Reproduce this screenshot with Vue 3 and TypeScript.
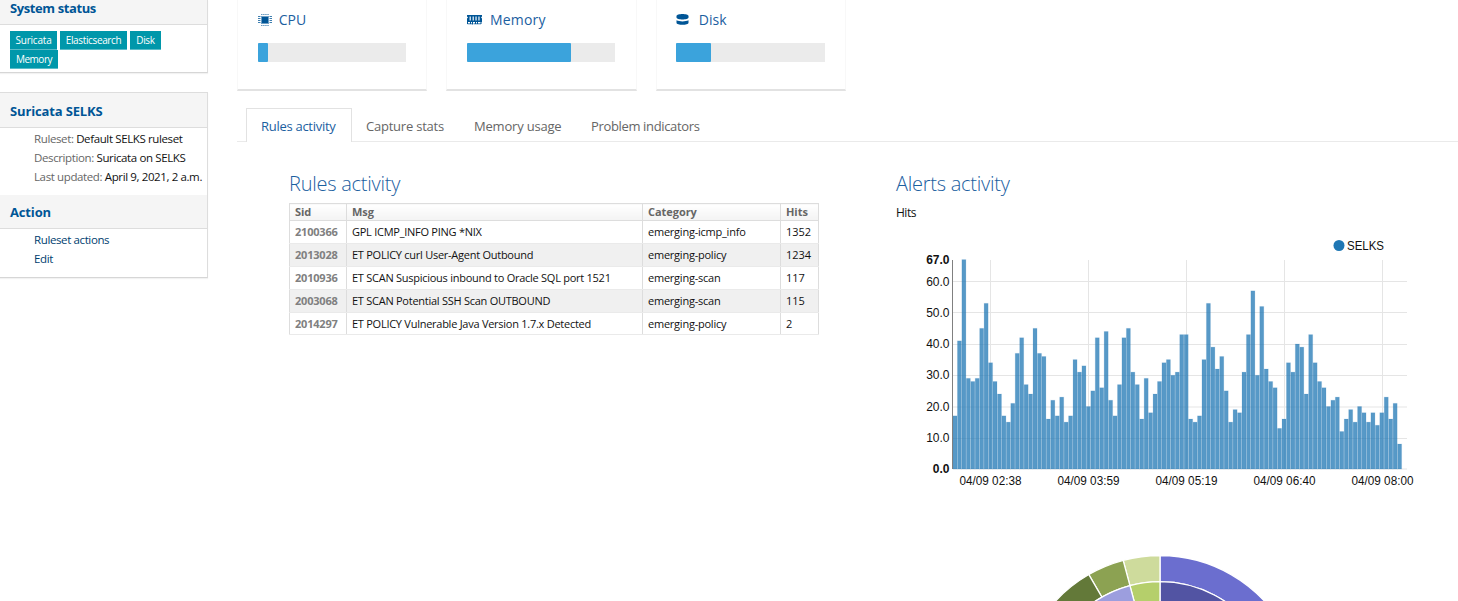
<script setup lang="ts">
interface Gauge { name: string; icon: 'cpu' | 'memory' | 'disk'; value: number }
interface Rule { sid: string; msg: string; category: string; hits: number }
interface Tick { label: string; pos: number; bold?: boolean }
interface Slice { from: number; to: number; inner: number; outer: number; color: string }

const services: string[] = ['Suricata', 'Elasticsearch', 'Disk', 'Memory']

const gauges: Gauge[] = [
  { name: 'CPU', icon: 'cpu', value: 7 },
  { name: 'Memory', icon: 'memory', value: 70 },
  { name: 'Disk', icon: 'disk', value: 23.5 },
]

const tabs = [
  { name: 'Rules activity', cls: 't-rules' },
  { name: 'Capture stats', cls: 't-capture' },
  { name: 'Memory usage', cls: 't-memory' },
  { name: 'Problem indicators', cls: 't-problem' },
]

const rules: Rule[] = [
  { sid: '2100366', msg: 'GPL ICMP_INFO PING *NIX', category: 'emerging-icmp_info', hits: 1352 },
  { sid: '2013028', msg: 'ET POLICY curl User-Agent Outbound', category: 'emerging-policy', hits: 1234 },
  { sid: '2010936', msg: 'ET SCAN Suspicious inbound to Oracle SQL port 1521', category: 'emerging-scan', hits: 117 },
  { sid: '2003068', msg: 'ET SCAN Potential SSH Scan OUTBOUND', category: 'emerging-scan', hits: 115 },
  { sid: '2014297', msg: 'ET POLICY Vulnerable Java Version 1.7.x Detected', category: 'emerging-policy', hits: 2 },
]

const hits: number[] = [
  17, 41, 67, 29, 28, 29, 45, 53, 34, 28, 24, 17, 15, 21, 37, 42, 27, 24, 45, 37,
  36, 16, 22, 17, 23, 15, 17, 35, 31, 33, 20, 25, 42, 26, 44, 22, 17, 27, 42, 45,
  31, 27, 16, 29, 18, 24, 28, 34, 35, 30, 31, 43, 43, 16, 15, 17, 35, 53, 39, 32,
  36, 25, 15, 19, 18, 31, 43, 57, 30, 52, 32, 28, 26, 13, 16, 34, 31, 40, 39, 24,
  43, 34, 28, 26, 20, 22, 23, 12, 16, 19, 15, 20, 18, 15, 18, 14, 18, 23, 16, 21, 8,
]

// Plot area of the bar chart, in chart coordinates
const left = 57
const base = 249
const scale = 3.125
const step = 4.446
const yOf = (v: number): number => base - v * scale

const yTicks: Tick[] = [67, 60, 50, 40, 30, 20, 10, 0].map((v) => ({
  label: v.toFixed(1),
  pos: yOf(v),
  bold: v === 67 || v === 0,
}))
const gridRows: number[] = [61.5, 92.5, 124.5, 155.5, 187, 218.5, 249]
const xTicks: Tick[] = ['02:38', '03:59', '05:19', '06:40', '08:00'].map((t, i) => ({
  label: `04/09 ${t}`,
  pos: 94.5 + i * 98,
}))

const slices: Slice[] = [
  { from: 0, to: 120, inner: 116.2, outer: 142.3, color: '#6b6ecf' },
  { from: 0, to: 120, inner: 82, outer: 116.2, color: '#5254a3' },
  { from: -15, to: 0, inner: 116.2, outer: 142.3, color: '#cedb9c' },
  { from: -15, to: 0, inner: 82, outer: 116.2, color: '#b5cf6b' },
  { from: -30, to: -15, inner: 116.2, outer: 142.3, color: '#8ca252' },
  { from: -80, to: -30, inner: 116.2, outer: 142.3, color: '#637939' },
  { from: -80, to: -15, inner: 82, outer: 116.2, color: '#9c9ede' },
]

function point(angle: number, r: number): string {
  const a = (angle * Math.PI) / 180
  return `${(Math.sin(a) * r).toFixed(2)},${(-Math.cos(a) * r).toFixed(2)}`
}
function arc(s: Slice): string {
  return `M${point(s.from, s.outer)}A${s.outer},${s.outer} 0 0 1 ${point(s.to, s.outer)}` +
    `L${point(s.to, s.inner)}A${s.inner},${s.inner} 0 0 0 ${point(s.from, s.inner)}Z`
}
</script>

<template>
  <div class="page">
    <aside class="sidebar">
      <section class="panel status">
        <h3 class="w-status">System status</h3>
        <div class="labels">
          <span v-for="s in services" :key="s" class="label" :class="'l-' + s.toLowerCase()">{{ s }}</span>
        </div>
      </section>
      <section class="panel host">
        <h3 class="w-selks">Suricata SELKS</h3>
        <ul class="info">
          <li><span class="key">Ruleset:</span> Default SELKS ruleset</li>
          <li><span class="key">Description:</span> Suricata on SELKS</li>
          <li><span class="key">Last updated:</span> April 9, 2021, 2 a.m.</li>
        </ul>
        <h3 class="action">Action</h3>
        <ul class="links">
          <li><a>Ruleset actions</a></li>
          <li><a>Edit</a></li>
        </ul>
      </section>
    </aside>

    <main class="main">
      <div class="gauges">
        <div v-for="g in gauges" :key="g.name" class="gauge">
          <div class="gauge-title">
            <svg v-if="g.icon === 'cpu'" class="icon" width="14" height="14" viewBox="0 0 14 14">
              <path d="M3 1.500h8M3 12.500h8" stroke="#005596" stroke-width="1" stroke-dasharray="1.500 .6" opacity=".6" />
              <path d="M0 3.500h2.500M0 5.500h2.500M0 7.500h2.500M0 9.500h2.500M11.500 3.500h2.500M11.500 5.500h2.500M11.500 7.500h2.500M11.500 9.500h2.500" stroke="#005596" stroke-width="1" opacity=".75" />
              <rect x="3" y="3" width="8" height="8" fill="#6f9fc5" />
              <rect x="4" y="4" width="6" height="6" fill="#005596" />
            </svg>
            <svg v-else-if="g.icon === 'memory'" class="icon" width="15" height="14" viewBox="0 0 15 14">
              <path d="M0 2h15v1.5l-1 1 1 1V9H0V5.500l1-1-1-1z" fill="#005596" />
              <path d="M2.500 3.500h1.500v4h-1.500zM5.500 3.500h1.500v4h-1.500zM8.300 3.500h1.500v4h-1.500zM11.200 3.500h1.500v4h-1.500z" fill="#c4d9e9" />
              <path d="M.5 9v2M3.500 9v2M5.500 9v2.500M8.500 9v2M10.500 9v2M14 9v2" stroke="#005596" />
              <path d="M.5 10.800h4.500M6.500 10.800h7.500" stroke="#005596" stroke-width=".8" />
            </svg>
            <svg v-else class="icon" width="13" height="14" viewBox="0 0 13 14">
              <path d="M.5 3.200C.5.400 12.500.400 12.500 3.200v1.300c0 2.600-12 2.600-12 0z" fill="#005596" />
              <path d="M.5 7.300c3 1.500 9 1.500 12 0v2.400c0 2.700-12 2.700-12 0z" fill="#005596" />
            </svg>
            <span :class="'g-' + g.icon">{{ g.name }}</span>
          </div>
          <div class="track"><div class="fill" :style="{ width: g.value + '%' }"></div></div>
        </div>
      </div>

      <nav class="tabs">
        <a v-for="(t, i) in tabs" :key="t.name" class="tab" :class="[t.cls, { active: i === 0 }]"><span>{{ t.name }}</span></a>
      </nav>

      <div class="content">
        <section class="rules">
          <h2>Rules activity</h2>
          <table>
            <colgroup><col class="c1"><col class="c2"><col class="c3"><col class="c4"></colgroup>
            <thead>
              <tr><th>Sid</th><th>Msg</th><th>Category</th><th>Hits</th></tr>
            </thead>
            <tbody>
              <tr v-for="r in rules" :key="r.sid">
                <td class="sid">{{ r.sid }}</td>
                <td class="msg">{{ r.msg }}</td>
                <td class="cat">{{ r.category }}</td>
                <td>{{ r.hits }}</td>
              </tr>
            </tbody>
          </table>
        </section>

        <section class="alerts">
          <h2>Alerts activity</h2>
          <p class="unit">Hits</p>
          <svg class="chart" width="561" height="280" viewBox="0 0 561 280">
            <circle cx="443" cy="25.500" r="5.500" fill="#1f77b4" />
            <text x="451" y="29.500" textLength="37" lengthAdjust="spacingAndGlyphs">SELKS</text>
            <path v-for="y in gridRows" :key="'r' + y" :d="`M57 ${y}H511`" stroke="#e5e5e5" />
            <path v-for="t in xTicks" :key="'c' + t.pos" :d="`M${t.pos} 40V249`" stroke="#e5e5e5" />
            <rect
              v-for="(v, i) in hits" :key="i" :x="left + i * step" :y="yOf(v)"
              :width="step - 0.45" :height="v * scale" fill="#1f77b4" fill-opacity=".75"
              stroke="#1f77b4" stroke-opacity=".12" stroke-width="1"
            />
            <path d="M56.500 40V249" stroke="#808080" />
            <text
              v-for="t in yTicks" :key="'y' + t.label" x="53.500" :y="t.pos + 4"
              text-anchor="end" :class="{ bold: t.bold }"
            >{{ t.label }}</text>
            <text
              v-for="t in xTicks" :key="t.label" :x="t.pos" y="264.500" text-anchor="middle"
              textLength="62" lengthAdjust="spacingAndGlyphs"
            >{{ t.label }}</text>
          </svg>
          <svg class="sunburst" width="561" height="101" viewBox="0 0 561 101">
            <g transform="translate(264 197.800)" stroke="#fff" stroke-width="1.300">
              <path v-for="(s, i) in slices" :key="i" :d="arc(s)" :fill="s.color" />
            </g>
          </svg>
        </section>
      </div>
    </main>
  </div>
</template>

<style>
html, body { margin: 0; background: #fff; overflow: hidden; }
</style>

<style scoped>
* { box-sizing: border-box; }
h2, h3, p, ul { margin: 0; padding: 0; }
.page {
  display: flex;
  width: 1458px;
  height: 601px;
  overflow: hidden;
  font-family: "Open Sans", "Noto Sans", sans-serif;
  font-size: 12px;
  color: #111;
  background: #fff;
}
.sidebar { width: 208px; flex: none; }
.panel {
  border: 1px solid #ddd;
  border-left: 0;
  border-bottom-color: #d6d6d6;
  box-shadow: 0 1px 1px rgba(0, 0, 0, .05);
}
.status { height: 73px; border-top: 0; }
.host { height: 186px; margin-top: 19px; }
h3 {
  padding-left: 10px;
  background: #f5f5f5;
  border-bottom: 1px solid #ddd;
  color: #005596;
  font-size: 13px;
  font-weight: 700;
  white-space: nowrap;
}
.status h3 { height: 25px; line-height: 16px; letter-spacing: -.4px; }
.host h3 { height: 35px; line-height: 36px; letter-spacing: -.15px; }
.host h3.action { height: 34px; line-height: 34px; }
.labels { display: flex; flex-wrap: wrap; gap: 0 3px; padding: 6px 40px 0 10px; }
.label {
  height: 19px;
  border: 1px solid #5bbcc8;
  border-width: 0 0 1px;
  background: #0097aa;
  color: #fff;
  font-size: 10px;
  line-height: 18px;
  text-align: center;
  white-space: nowrap;
}
.l-suricata { width: 47px; letter-spacing: -.2px; }
.l-elasticsearch { width: 67px; letter-spacing: -.36px; }
.l-disk { width: 31px; letter-spacing: -.3px; }
.l-memory { width: 48px; letter-spacing: -.5px; }
ul { list-style: none; }
li { height: 19px; padding-left: 34px; line-height: 19px; font-size: 11.500px; letter-spacing: -.38px; white-space: nowrap; }
.key { color: #666; }
.info { height: 67px; padding-top: 1px; }
.links { padding-top: 1px; }
.links a { color: #00406f; }
.main { flex: 1; min-width: 0; }
.gauges { display: flex; gap: 19px; padding-left: 29px; height: 91px; }
.gauge {
  width: 190.300px;
  padding: 10px 20px 0 19.700px;
  border: 1px solid #f8f8f8;
  border-top: 0;
  border-bottom: 2px solid #e2e2e2;
}
.gauge-title { display: flex; align-items: center; height: 19px; color: #1b609f; font-size: 14px; line-height: 19px; }
.icon { flex: none; margin-right: 8px; }
.g-cpu { margin-left: -1px; }
.g-memory { letter-spacing: .2px; }
.g-disk { margin-left: 1.500px; }
.track { margin-top: 14px; width: 148.500px; height: 19px; background: #ebebeb; }
.fill { height: 100%; background: #3ba3dc; border-radius: 1px; }
.tabs { display: flex; height: 34px; margin: 17px 0 0 29px; padding-left: 9px; border-bottom: 1px solid #eaeaea; }
.tab { height: 34px; line-height: 36px; font-size: 13px; color: #666; white-space: nowrap; letter-spacing: -.28px; }
.tab.active { border: 1px solid #e2e2e2; border-bottom: 0; background: #fff; color: #1b609f; line-height: 34px; }
.t-rules { width: 106px; padding-left: 14px; }
.t-capture { width: 107px; padding-left: 14px; letter-spacing: -.22px; }
.t-memory { width: 117px; padding-left: 15px; letter-spacing: -.2px; }
.t-problem { padding-left: 15px; letter-spacing: -.35px; }
.content { display: flex; padding-top: 27px; }
.rules { width: 607px; padding-left: 81px; margin-right: 81px; flex: none; }
h2 { height: 34px; line-height: 29px; font-size: 20px; font-weight: 300; color: #1b609f; white-space: nowrap; letter-spacing: -.25px; }
table { width: 530px; table-layout: fixed; border-collapse: collapse; font-size: 11px; }
.c1 { width: 57px; }
.c2 { width: 296px; }
.c3 { width: 138px; }
.c4 { width: 38px; }
th, td { border: 1px solid #ddd; padding: 0 5px; text-align: left; white-space: nowrap; }
th { height: 17px; line-height: 16px; color: #666; font-weight: 700; background: linear-gradient(#fff, #f3f3f3); letter-spacing: -.05px; }
td { height: 23px; line-height: 22px; border-top-color: #eaeaea; border-bottom-color: #eaeaea; }
tbody tr:last-child td { height: 22px; line-height: 21px; }
.sid { color: #808080; font-weight: 700; letter-spacing: -.2px; }
.msg { letter-spacing: -.26px; }
.cat { letter-spacing: -.23px; }
tbody tr:nth-child(even) { background: #f0f0f0; }
.alerts { width: 561px; flex: none; }
.unit { height: 17px; line-height: 20px; font-size: 12px; letter-spacing: -.5px; }
.chart { display: block; font-family: "Liberation Sans", Arial, sans-serif; font-size: 12px; fill: #111; }
.bold { font-weight: 700; }
.sunburst { display: block; }
</style>
